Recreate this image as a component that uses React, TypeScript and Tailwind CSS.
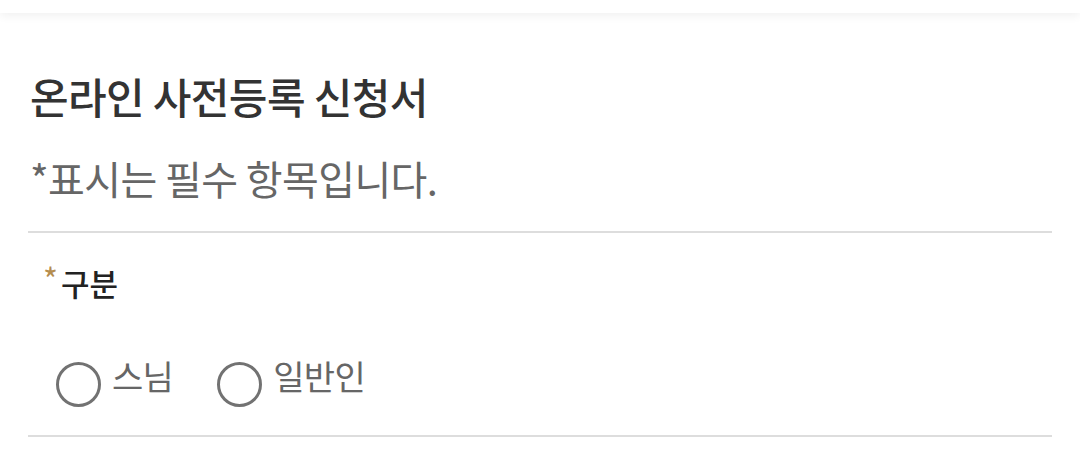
import React, { useState } from 'react';

const font = 'font-["Noto_Sans_CJK_KR","Noto_Sans",sans-serif]';

export default function App() {
  const [kind, setKind] = useState<string | null>(null);
  const options = ['스님', '일반인'];

  return (
    <div className={`min-h-[455px] bg-white ${font}`}>
      <div className="relative z-10 h-[13px] bg-white shadow-[0_3px_10px_rgba(0,0,0,0.06)]" />

      <div className="px-[28px]">
        <h1 className="pt-[58px] pl-[2px] text-[42px] font-medium leading-[50px] tracking-[-0.015em] text-[#333]">
          온라인 사전등록 신청서
        </h1>
        <p className="pt-[33px] pl-[2px] text-[40px] leading-[48px] tracking-[-0.015em] text-[#666]">
          *표시는 필수 항목입니다.
        </p>

        <div className="mt-[29px] border-t-2 border-[#ddd]">
          <div className="flex items-center pt-[28px] pl-[15px]">
            <span className="mt-[-10px] text-[32px] leading-[30px] text-[#b58d4f]">*</span>
            <span className="ml-[3px] text-[31px] font-medium leading-[44px] text-[#222]">구분</span>
          </div>

          <div className="flex items-center gap-[44px] pt-[57px] pb-[28px] pl-[28px]">
            {options.map((o) => (
              <label key={o} className="flex cursor-pointer items-center gap-[11px]" onClick={() => setKind(o)}>
                <span className="flex h-[45px] w-[45px] items-center justify-center rounded-full border-[3px] border-[#727272]">
                  {kind === o && <span className="h-[24px] w-[24px] rounded-full bg-[#727272]" />}
                </span>
                <span className="mt-[-18px] text-[34px] leading-[44px] tracking-[-0.02em] text-[#666]">{o}</span>
              </label>
            ))}
          </div>

          <div className="border-t-2 border-[#ddd]" />
        </div>
      </div>
    </div>
  );
}
